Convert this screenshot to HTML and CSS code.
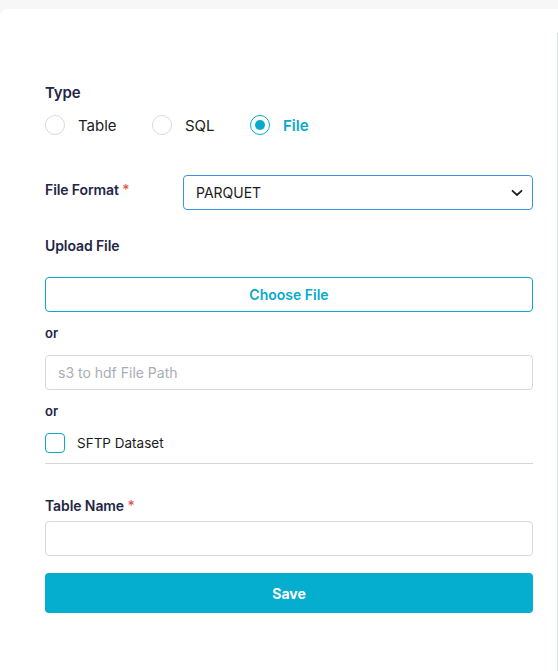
FILE: index.html
```html
<!DOCTYPE html>
<html>
<head>
<meta charset="utf-8">
<link rel="stylesheet" href="styles.css">
</head>
<body>
<div class="card">
  <form class="form">
    <div class="label type-label">Type</div>
    <div class="radios">
      <label class="radio"><span class="circle"></span><span>Table</span></label>
      <label class="radio"><span class="circle"></span><span>SQL</span></label>
      <label class="radio active"><span class="circle"><span class="dot"></span></span><span>File</span></label>
    </div>

    <div class="format-row">
      <div class="label format-label">File Format <span class="req">*</span></div>
      <div class="select">
        <span>PARQUET</span>
        <svg class="chev" width="12" height="8" viewBox="0 0 12 8"><path d="M1.5 1.8 L6 6 L10.5 1.8" fill="none" stroke="#222" stroke-width="1.8" stroke-linecap="round" stroke-linejoin="round"/></svg>
      </div>
    </div>

    <div class="label upload-label">Upload File</div>
    <div class="choose">Choose File</div>

    <div class="or or1">or</div>
    <div class="input placeholder">s3 to hdf File Path</div>

    <div class="or or2">or</div>
    <label class="check-row"><span class="checkbox"></span><span>SFTP Dataset</span></label>
    <div class="divider"></div>

    <div class="label name-label">Table Name <span class="req">*</span></div>
    <div class="input name-input"></div>

    <div class="save">Save</div>
  </form>
</div>
</body>
</html>
```
FILE: styles.css
```css
* { box-sizing: border-box; }
html, body { margin: 0; padding: 0; }
body {
  background: #f7f7f7;
  font-family: Inter, "Open Sans", Arial, sans-serif;
  color: #1c1f2e;
  width: 558px;
  height: 671px;
  overflow: hidden;
}
.card {
  position: relative;
  margin-top: 9px;
  background: #fff;
  border-top-left-radius: 8px;
  height: 662px;
  padding: 74px 25px 0 45px;
}
.card::after {
  content: "";
  position: absolute;
  right: 0;
  top: 24px;
  bottom: 0;
  width: 1px;
  background: #dfe6ea;
}
.form { display: flex; flex-direction: column; }
.label {
  font-size: 14px;
  font-weight: 600;
  color: #232645;
  line-height: 20px;
  letter-spacing: -0.1px;
}
.type-label { font-size: 15px; height: 20px; }
.req { color: #e0574b; font-weight: 500; }

.radios { display: flex; margin-top: 12px; height: 20px; align-items: center; }
.radio {
  display: flex; align-items: center;
  font-size: 15px; color: #1d1d22;
}
.radio:nth-child(1) { width: 107px; }
.radio:nth-child(2) { width: 98px; }
.circle {
  width: 20px; height: 20px; border-radius: 50%;
  border: 1px solid #d6d9de;
  margin-right: 13px;
  display: flex; align-items: center; justify-content: center;
}
.radio.active { color: #07aacc; font-weight: 600; }
.radio.active .circle { border: 1.5px solid #07aacc; }
.dot { width: 10px; height: 10px; border-radius: 50%; background: #07aacc; }

.format-row { display: flex; margin-top: 40px; align-items: flex-start; }
.format-label { width: 138px; padding-top: 5px; }
.select {
  flex: 1;
  height: 35px;
  border: 1px solid #3d92e3;
  border-radius: 4px;
  display: flex; align-items: center; justify-content: space-between;
  padding: 0 9px 0 12px;
  font-size: 14px;
  color: #1b1b20;
}

.upload-label { margin-top: 26px; }
.choose {
  margin-top: 21px;
  height: 35px;
  border: 1px solid #07aacc;
  border-radius: 4px;
  display: flex; align-items: center; justify-content: center;
  color: #07aacc;
  font-size: 14px;
  font-weight: 600;
}
.or {
  font-size: 13px; font-weight: 600; color: #232645;
  line-height: 18px;
}
.or1 { margin-top: 12px; }
.or2 { margin-top: 12px; }
.input {
  height: 35px;
  border: 1px solid #d5d8de;
  border-radius: 4px;
  display: flex; align-items: center;
  padding-left: 12px;
  font-size: 14px;
}
.placeholder { color: #a9adb6; margin-top: 13px; }

.check-row {
  margin-top: 13px;
  display: flex; align-items: center;
  font-size: 13.5px; color: #1b1b20;
  height: 20px;
}
.checkbox {
  width: 20px; height: 20px;
  border: 1.5px solid #07aacc;
  border-radius: 4px;
  margin-right: 12px;
}
.divider { margin-top: 10px; height: 1px; background: #d6d6d6; }

.name-label { margin-top: 32px; }
.name-input { margin-top: 5px; }
.save {
  margin-top: 17px;
  height: 40px;
  background: #05adcf;
  border-radius: 4px;
  display: flex; align-items: center; justify-content: center;
  color: #fff;
  font-size: 14px;
  font-weight: 700;
}
```
